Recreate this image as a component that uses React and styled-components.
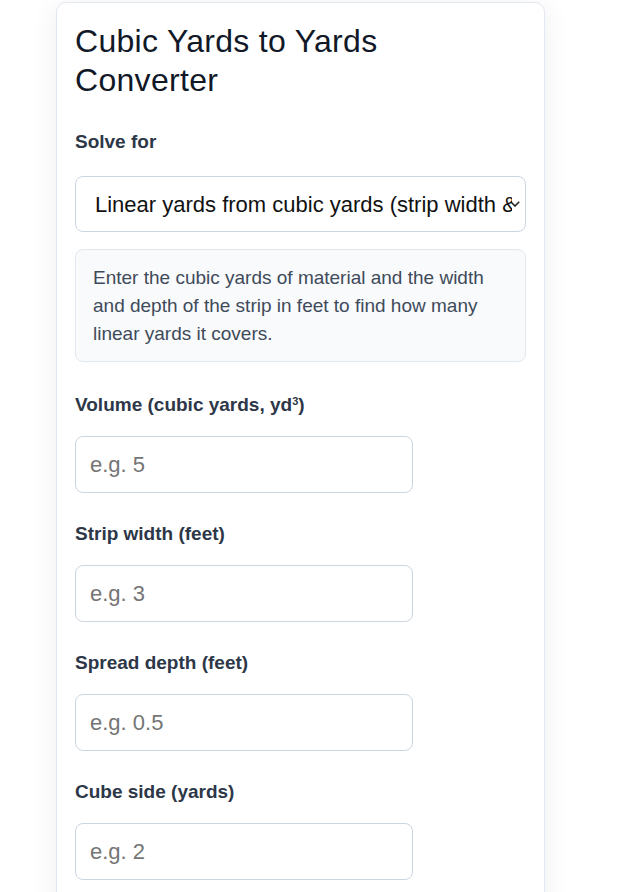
import React, { useState } from "react";
import styled, { createGlobalStyle } from "styled-components";

const GlobalStyle = createGlobalStyle`
	* {
		box-sizing: border-box;
	}
	body {
		margin: 0;
		background: #ffffff;
		font-family: "Liberation Sans", Arial, sans-serif;
	}
`;

const Page = styled.div`
	padding: 2px 0 0 56px;
`;

const Card = styled.div`
	width: 489px;
	min-height: 900px;
	padding: 19px 18px 24px;
	background: #ffffff;
	border: 1px solid #e2e8f0;
	border-radius: 10px;
	box-shadow: 0 4px 28px rgba(15, 23, 42, 0.07);
`;

const Title = styled.h1`
	margin: 0 0 31px;
	font-size: 32px;
	font-weight: 400;
	letter-spacing: 0.3px;
	line-height: 39px;
	color: #111827;
`;

const Field = styled.div`
	display: flex;
	flex-direction: column;
	margin-bottom: ${(p) => p.$gap || 30}px;
`;

const Label = styled.label`
	font-size: 19px;
	font-weight: 700;
	line-height: 22px;
	color: #2d3748;
	margin-bottom: ${(p) => p.$gap || 20}px;
`;

const Sup = styled.span`
	font-size: 11px;
	line-height: 0;
	vertical-align: 6px;
`;

const chevron =
	"data:image/svg+xml;utf8,<svg xmlns='http://www.w3.org/2000/svg' width='10' height='6' viewBox='0 0 10 6'><path d='M0.8 0.8l4.2 4.2 4.2-4.2' fill='none' stroke='%23222' stroke-width='1.6'/></svg>";

const Select = styled.select`
	appearance: none;
	width: 100%;
	height: 56px;
	padding: 0 13px 0 19px;
	font-family: inherit;
	font-size: 22px;
	color: #111111;
	background: #ffffff url("${chevron}") no-repeat right 5px center;
	border: 1px solid #cbd5e1;
	border-radius: 8px;
	outline: none;
`;

const Info = styled.div`
	padding: 14px 17px 13px;
	font-size: 19px;
	line-height: 28px;
	color: #3f4a5a;
	background: #f8fafc;
	border: 1px solid #e2e8f0;
	border-radius: 8px;
	margin-bottom: 32px;
`;

const Input = styled.input`
	width: 338px;
	height: 57px;
	padding: 0 14px;
	font-family: inherit;
	font-size: 22px;
	color: #111111;
	background: #ffffff;
	border: 1px solid #cbd5e1;
	border-radius: 8px;
	outline: none;
	&::placeholder {
		color: #757575;
	}
`;

const fields = [
	{
		id: "volume",
		label: (
			<>
				Volume (cubic yards, yd<Sup>3</Sup>)
			</>
		),
		placeholder: "e.g. 5",
	},
	{ id: "width", label: "Strip width (feet)", placeholder: "e.g. 3" },
	{ id: "depth", label: "Spread depth (feet)", placeholder: "e.g. 0.5" },
	{ id: "side", label: "Cube side (yards)", placeholder: "e.g. 2" },
];

const App = () => {
	const [mode, setMode] = useState("linear");
	const [values, setValues] = useState({});

	return (
		<Page>
			<GlobalStyle />
			<Card>
				<Title>Cubic Yards to Yards Converter</Title>
				<Field $gap={17}>
					<Label htmlFor="mode" $gap={23}>
						Solve for
					</Label>
					<Select id="mode" value={mode} onChange={(e) => setMode(e.target.value)}>
						<option value="linear">Linear yards from cubic yards (strip width &amp; depth)</option>
						<option value="cube">Cube side from cubic yards</option>
					</Select>
				</Field>
				<Info>
					Enter the cubic yards of material and the width and depth of the strip in feet to find how many
					linear yards it covers.
				</Info>
				{fields.map((f) => (
					<Field key={f.id}>
						<Label htmlFor={f.id}>{f.label}</Label>
						<Input
							id={f.id}
							type="text"
							placeholder={f.placeholder}
							value={values[f.id] || ""}
							onChange={(e) => setValues({ ...values, [f.id]: e.target.value })}
						/>
					</Field>
				))}
			</Card>
		</Page>
	);
};

export default App;
